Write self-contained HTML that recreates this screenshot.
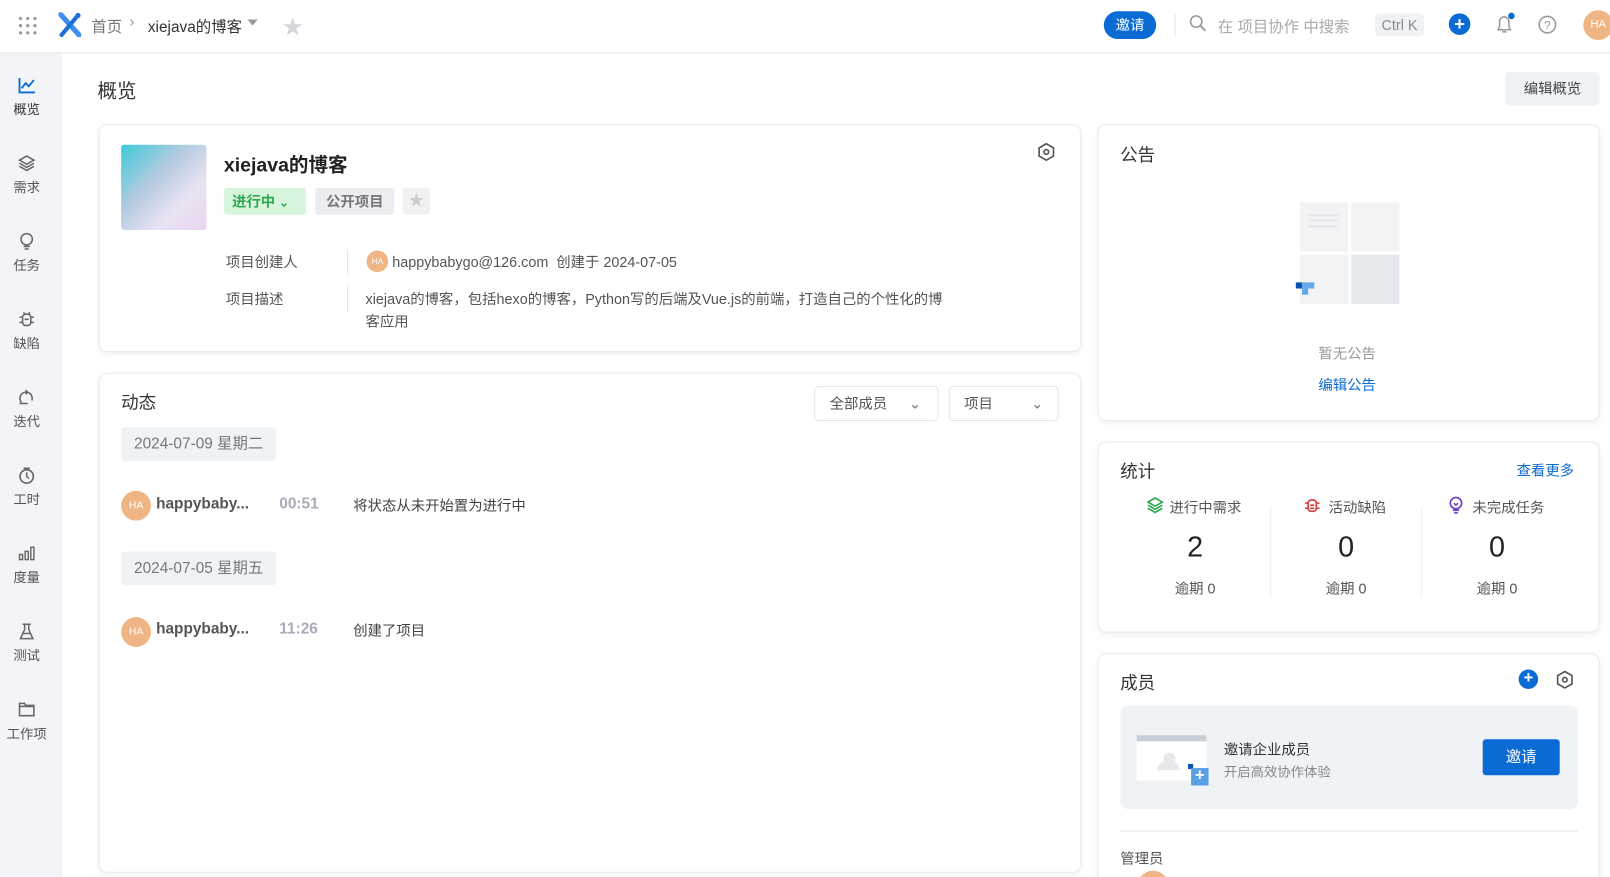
<!DOCTYPE html>
<html><head><meta charset="utf-8"><style>
*{box-sizing:border-box;margin:0;padding:0}
html,body{width:1610px;height:877px;overflow:hidden;background:#fff}
body{font-family:"Liberation Sans","Noto Sans CJK SC",sans-serif;color:#333;position:relative;font-size:14px}
#w{position:absolute;left:0;top:0;width:1568px;height:854px;transform:scale(1.02679);transform-origin:0 0}
.a{position:absolute}
.card{position:absolute;background:#fff;border:1px solid #e8eaed;border-radius:8px;box-shadow:0 2px 6px rgba(0,0,0,.06)}
.side{left:0;top:52px;width:61px;height:825px;background:#f2f4f7}
.si{position:absolute;left:0;width:52px;text-align:center;font-size:13px;color:#555}
.si svg{display:block;margin:0 auto 4px}
.t{color:#333}
.gray{color:#888}
.avatar{border-radius:50%;background:#f0b584;color:#fff;text-align:center;font-size:10px}
</style></head><body><div id="w">
<!-- top bar -->
<div class="a" style="left:0;top:0;width:1610px;height:52px;border-bottom:1px solid #e6e8eb;background:#fff"></div>
<svg class="a" style="left:18px;top:16px" width="18" height="18"><g fill="#999"><circle cx="2" cy="2" r="1.6"/><circle cx="9" cy="2" r="1.6"/><circle cx="16" cy="2" r="1.6"/><circle cx="2" cy="9" r="1.6"/><circle cx="9" cy="9" r="1.6"/><circle cx="16" cy="9" r="1.6"/><circle cx="2" cy="16" r="1.6"/><circle cx="9" cy="16" r="1.6"/><circle cx="16" cy="16" r="1.6"/></g></svg>
<svg class="a" style="left:57px;top:12px" width="22" height="24"><path d="M2 2 L20 22" stroke="#3d8ef0" stroke-width="5" stroke-linecap="round"/><path d="M18 4 L3 22" stroke="#1a6fd8" stroke-width="4" stroke-linecap="round"/><circle cx="19" cy="3" r="2.5" fill="#1a6fd8"/></svg>
<div class="a gray" style="left:89px;top:15px;font-size:15px;color:#777">首页</div>
<div class="a" style="left:126px;top:13px;font-size:15px;color:#999">›</div>
<div class="a t" style="left:144px;top:15px;font-size:15px">xiejava的博客</div>
<div class="a" style="left:241px;top:19px;width:0;height:0;border-left:5px solid transparent;border-right:5px solid transparent;border-top:6px solid #999"></div>
<div class="a" style="left:275px;top:10px;font-size:20px;color:#d5d7db">★</div>
<div class="a" style="left:1075px;top:11px;width:51px;height:27px;border-radius:14px;background:#0b6bd4;color:#fff;font-size:14px;text-align:center;line-height:27px">邀请</div>
<div class="a" style="left:1144px;top:14px;width:1px;height:21px;background:#e3e3e3"></div>
<svg class="a" style="left:1158px;top:14px" width="18" height="18"><circle cx="7" cy="7" r="5.5" fill="none" stroke="#999" stroke-width="1.6"/><path d="M11 11 L16 16" stroke="#999" stroke-width="1.8"/></svg>
<div class="a" style="left:1186px;top:15px;font-size:15px;color:#aaa">在 项目协作 中搜索</div>
<div class="a" style="left:1339px;top:13px;width:48px;height:22px;background:#f0f3f6;border-radius:4px;color:#888;font-size:14px;text-align:center;line-height:22px">Ctrl K</div>
<div class="a" style="left:1411px;top:13px;width:21px;height:21px;border-radius:50%;background:#0b6bd4;color:#fff;text-align:center;line-height:20px;font-size:18px;font-weight:bold">+</div>
<svg class="a" style="left:1455px;top:12px" width="22" height="22"><path d="M4 17 L16 17 L14.5 14 L14.5 9 A4.5 4.5 0 0 0 5.5 9 L5.5 14 Z M8 19 L12 19" fill="none" stroke="#999" stroke-width="1.5"/><circle cx="17" cy="3.5" r="3.2" fill="#0b6bd4"/></svg>
<svg class="a" style="left:1497px;top:14px" width="20" height="20"><circle cx="10" cy="10" r="8" fill="none" stroke="#999" stroke-width="1.5"/><text x="10" y="14.5" font-size="12" text-anchor="middle" fill="#999" font-family="Liberation Sans">?</text></svg>
<div class="a avatar" style="left:1542px;top:10px;width:29px;height:29px;line-height:29px;font-size:11px">HA</div>

<!-- sidebar -->
<div class="a side"></div>
<div class="si" style="top:74px;color:#333"><svg width="18" height="18"><path d="M2 2 V16 H17 M4 12 L8 7 L11 10 L16 4" fill="none" stroke="#0b6bd4" stroke-width="1.8"/></svg>概览</div>
<div class="si" style="top:150px"><svg width="18" height="18"><path d="M9 2 L16 6 L9 10 L2 6Z M2 9 L9 13 L16 9 M2 12 L9 16 L16 12" fill="none" stroke="#666" stroke-width="1.5"/></svg>需求</div>
<div class="si" style="top:226px"><svg width="18" height="18"><circle cx="9" cy="7" r="5.5" fill="none" stroke="#666" stroke-width="1.5"/><path d="M6 14 H12 M7 16.5 H11" stroke="#666" stroke-width="1.5"/></svg>任务</div>
<div class="si" style="top:302px"><svg width="18" height="18"><rect x="5" y="4" width="8" height="11" rx="3" fill="none" stroke="#666" stroke-width="1.5"/><path d="M2 7 H5 M13 7 H16 M2 12 H5 M13 12 H16 M7 9 H11 M6 2 L7 4 M12 2 L11 4" stroke="#666" stroke-width="1.5"/></svg>缺陷</div>
<div class="si" style="top:378px"><svg width="18" height="18"><path d="M4 14 A6 6 0 1 1 14 12 M2 15 H10 M8 2 L10 4 L8 6" fill="none" stroke="#666" stroke-width="1.5"/></svg>迭代</div>
<div class="si" style="top:454px"><svg width="18" height="18"><circle cx="9" cy="10" r="6.5" fill="none" stroke="#666" stroke-width="1.6"/><path d="M6 2 H12 M9 6 V10 L11 12" fill="none" stroke="#666" stroke-width="1.5"/></svg>工时</div>
<div class="si" style="top:530px"><svg width="18" height="18"><rect x="2" y="10" width="3" height="5" fill="none" stroke="#666" stroke-width="1.4"/><rect x="7.5" y="7" width="3" height="8" fill="none" stroke="#666" stroke-width="1.4"/><rect x="13" y="3" width="3" height="12" fill="none" stroke="#666" stroke-width="1.4"/></svg>度量</div>
<div class="si" style="top:606px"><svg width="18" height="18"><path d="M5 2 H13 M7 2 V7 L3 16 H15 L11 7 V2 M5 11 H13" fill="none" stroke="#666" stroke-width="1.5"/></svg>测试</div>
<div class="si" style="top:682px"><svg width="18" height="18"><path d="M2 3 H7 L8 5 H16 V15 H2Z M2 6 H16" fill="none" stroke="#666" stroke-width="1.5"/></svg>工作项</div>

<!-- header -->
<div class="a t" style="left:95px;top:74px;font-size:19px">概览</div>
<div class="a" style="left:1466px;top:70px;width:92px;height:33px;background:#f0f3f6;border-radius:4px;text-align:center;line-height:33px;font-size:14px;color:#444">编辑概览</div>

<!-- project card -->
<div class="card" style="left:96px;top:121px;width:957px;height:222px"></div>
<div class="a" style="left:118px;top:141px;width:83px;height:83px;border-radius:3px;background:linear-gradient(135deg,#3ecad8 0%,#b5cbe0 40%,#e9e3f3 70%,#ead4ee 100%)"></div>
<div class="a t" style="left:218px;top:146px;font-size:19px;font-weight:bold;color:#222">xiejava的博客</div>
<div class="a" style="left:218px;top:183px;width:80px;height:26px;border-radius:3px;background:#d7f5dc;color:#2fa84f;font-size:14px;line-height:26px;padding-left:8px;font-weight:bold">进行中 <span style="font-size:11px">⌄</span></div>
<div class="a" style="left:307px;top:183px;width:77px;height:26px;border-radius:3px;background:#ebedf0;color:#777;font-size:14px;line-height:26px;text-align:center;font-weight:bold">公开项目</div>
<div class="a" style="left:392px;top:183px;width:27px;height:26px;border-radius:3px;background:#f0f1f3;color:#ccc;font-size:15px;line-height:26px;text-align:center">★</div>
<svg class="a" style="left:1009px;top:138px" width="20" height="20"><path d="M10 2 L17 6 V14 L10 18 L3 14 V6Z" fill="none" stroke="#555" stroke-width="1.6"/><circle cx="10" cy="10" r="2.3" fill="none" stroke="#555" stroke-width="1.6"/></svg>
<div class="a" style="left:220px;top:245px;color:#555">项目创建人</div>
<div class="a" style="left:338px;top:243px;width:1px;height:25px;background:#e5e5e5"></div>
<div class="a avatar" style="left:357px;top:244px;width:21px;height:21px;line-height:21px;font-size:8px">HA</div>
<div class="a" style="left:382px;top:245px;color:#555">happybabygo@126.com&nbsp; 创建于 2024-07-05</div>
<div class="a" style="left:220px;top:281px;color:#555">项目描述</div>
<div class="a" style="left:338px;top:279px;width:1px;height:25px;background:#e5e5e5"></div>
<div class="a" style="left:356px;top:280px;width:640px;line-height:22px;color:#555;white-space:nowrap">xiejava的博客，包括hexo的博客，Python写的后端及Vue.js的前端，打造自己的个性化的博<br>客应用</div>

<!-- activity card -->
<div class="card" style="left:96px;top:363px;width:957px;height:487px"></div>
<div class="a t" style="left:118px;top:378px;font-size:17px">动态</div>
<div class="a" style="left:793px;top:376px;width:121px;height:34px;border:1px solid #e3e5e8;border-radius:4px;color:#555;line-height:32px;padding-left:14px">全部成员<span style="position:absolute;right:16px;color:#777">⌄</span></div>
<div class="a" style="left:924px;top:376px;width:107px;height:34px;border:1px solid #e3e5e8;border-radius:4px;color:#555;line-height:32px;padding-left:14px">项目<span style="position:absolute;right:14px;color:#777">⌄</span></div>
<div class="a" style="left:118px;top:416px;width:151px;height:33px;background:#f0f3f6;border-radius:3px;color:#777;font-size:15px;line-height:33px;text-align:center">2024-07-09 星期二</div>
<div class="a avatar" style="left:118px;top:478px;width:29px;height:29px;line-height:29px;font-size:10px">HA</div>
<div class="a" style="left:152px;top:482px;font-weight:bold;color:#555;font-size:15px">happybaby...</div>
<div class="a" style="left:272px;top:482px;font-weight:bold;color:#aab;font-size:15px">00:51</div>
<div class="a" style="left:344px;top:482px;color:#444">将状态从未开始置为进行中</div>
<div class="a" style="left:118px;top:537px;width:151px;height:33px;background:#f0f3f6;border-radius:3px;color:#777;font-size:15px;line-height:33px;text-align:center">2024-07-05 星期五</div>
<div class="a avatar" style="left:118px;top:601px;width:29px;height:29px;line-height:29px;font-size:10px">HA</div>
<div class="a" style="left:152px;top:604px;font-weight:bold;color:#555;font-size:15px">happybaby...</div>
<div class="a" style="left:272px;top:604px;font-weight:bold;color:#aab;font-size:15px">11:26</div>
<div class="a" style="left:344px;top:604px;color:#444">创建了项目</div>

<!-- announcement -->
<div class="card" style="left:1069px;top:121px;width:489px;height:289px"></div>
<div class="a t" style="left:1091px;top:137px;font-size:17px">公告</div>
<div class="a" style="left:1266px;top:197px;width:47px;height:48px;background:#f2f3f5"></div>
<div class="a" style="left:1316px;top:197px;width:47px;height:48px;background:#f2f3f5"></div>
<div class="a" style="left:1266px;top:248px;width:47px;height:48px;background:#f2f3f5"></div>
<div class="a" style="left:1316px;top:248px;width:47px;height:48px;background:#e4e7eb"></div>
<div class="a" style="left:1275px;top:209px;width:28px;height:1px;background:#dcdfe3;box-shadow:0 5px 0 #dcdfe3,0 11px 0 #dcdfe3"></div>
<div class="a" style="left:1262px;top:275px;width:6px;height:6px;background:#0b55b0"></div>
<div class="a" style="left:1268px;top:275px;width:6px;height:6px;background:#66a9e8"></div>
<div class="a" style="left:1274px;top:275px;width:6px;height:6px;background:#66a9e8"></div>
<div class="a" style="left:1268px;top:281px;width:6px;height:6px;background:#66a9e8"></div>
<div class="a" style="left:1284px;top:334px;color:#999">暂无公告</div>
<div class="a" style="left:1284px;top:365px;color:#0b6bd4">编辑公告</div>

<!-- stats -->
<div class="card" style="left:1069px;top:430px;width:489px;height:186px"></div>
<div class="a t" style="left:1091px;top:445px;font-size:17px">统计</div>
<div class="a" style="left:1477px;top:448px;color:#0b6bd4">查看更多</div>
<div class="a" style="left:1237px;top:494px;width:1px;height:88px;background:#eee"></div>
<div class="a" style="left:1384px;top:494px;width:1px;height:88px;background:#eee"></div>
<svg class="a" style="left:1117px;top:484px" width="16" height="16"><path d="M8 1 L15 5 L8 9 L1 5Z M1 8 L8 12 L15 8 M1 11 L8 15 L15 11" fill="none" stroke="#2fa84f" stroke-width="1.6"/></svg>
<div class="a" style="left:1139px;top:484px;color:#555">进行中需求</div>
<svg class="a" style="left:1270px;top:484px" width="16" height="16"><rect x="4" y="3" width="8" height="11" rx="3" fill="none" stroke="#d63a3a" stroke-width="1.6"/><path d="M1 6 H4 M12 6 H15 M1 11 H4 M12 11 H15 M6 8 H10 M6 11 H10" stroke="#d63a3a" stroke-width="1.5"/></svg>
<div class="a" style="left:1294px;top:484px;color:#555">活动缺陷</div>
<svg class="a" style="left:1410px;top:483px" width="16" height="18"><circle cx="8" cy="7" r="5.5" fill="none" stroke="#6a3fc9" stroke-width="1.6"/><path d="M5 14 H11 M6 16.5 H10 M6 7 L8 9 L10 7" fill="none" stroke="#6a3fc9" stroke-width="1.5"/></svg>
<div class="a" style="left:1434px;top:484px;color:#555">未完成任务</div>
<div class="a" style="left:1140px;top:517px;width:48px;text-align:center;font-size:28px;color:#222">2</div>
<div class="a" style="left:1287px;top:517px;width:48px;text-align:center;font-size:28px;color:#222">0</div>
<div class="a" style="left:1434px;top:517px;width:48px;text-align:center;font-size:28px;color:#222">0</div>
<div class="a" style="left:1130px;top:563px;width:68px;text-align:center;color:#555">逾期 0</div>
<div class="a" style="left:1277px;top:563px;width:68px;text-align:center;color:#555">逾期 0</div>
<div class="a" style="left:1424px;top:563px;width:68px;text-align:center;color:#555">逾期 0</div>

<!-- members -->
<div class="card" style="left:1069px;top:636px;width:489px;height:260px"></div>
<div class="a t" style="left:1091px;top:651px;font-size:17px">成员</div>
<div class="a" style="left:1479px;top:652px;width:19px;height:19px;border-radius:50%;background:#0b6bd4;color:#fff;text-align:center;line-height:18px;font-size:16px;font-weight:bold">+</div>
<svg class="a" style="left:1515px;top:652px" width="18" height="20"><path d="M9 2 L16 6 V14 L9 18 L2 14 V6Z" fill="none" stroke="#555" stroke-width="1.6"/><circle cx="9" cy="10" r="2.2" fill="none" stroke="#555" stroke-width="1.6"/></svg>
<div class="a" style="left:1091px;top:687px;width:446px;height:101px;background:#f0f3f6;border-radius:8px"></div>
<div class="a" style="left:1107px;top:716px;width:68px;height:44px;background:#fff;border-top:6px solid #c8ced6"></div>
<div class="a" style="left:1133px;top:733px;width:12px;height:12px;border-radius:50%;background:#e6e8eb"></div>
<div class="a" style="left:1127px;top:742px;width:22px;height:8px;border-radius:8px 8px 0 0;background:#e6e8eb"></div>
<div class="a" style="left:1157px;top:744px;width:5px;height:5px;background:#0b55b0"></div>
<div class="a" style="left:1160px;top:748px;width:17px;height:17px;background:#5aa0e6;color:#fff;text-align:center;line-height:16px;font-size:16px;font-weight:bold">+</div>
<div class="a" style="left:1192px;top:720px;color:#333">邀请企业成员</div>
<div class="a" style="left:1192px;top:741px;color:#888;font-size:13px">开启高效协作体验</div>
<div class="a" style="left:1444px;top:720px;width:75px;height:35px;background:#0b6bd4;border-radius:3px;color:#fff;text-align:center;line-height:35px;font-size:15px">邀请</div>
<div class="a" style="left:1091px;top:809px;width:446px;height:1px;background:#e6e8eb"></div>
<div class="a" style="left:1091px;top:826px;color:#555">管理员</div>
<div class="a avatar" style="left:1108px;top:848px;width:30px;height:30px"></div>
</div></body></html>
